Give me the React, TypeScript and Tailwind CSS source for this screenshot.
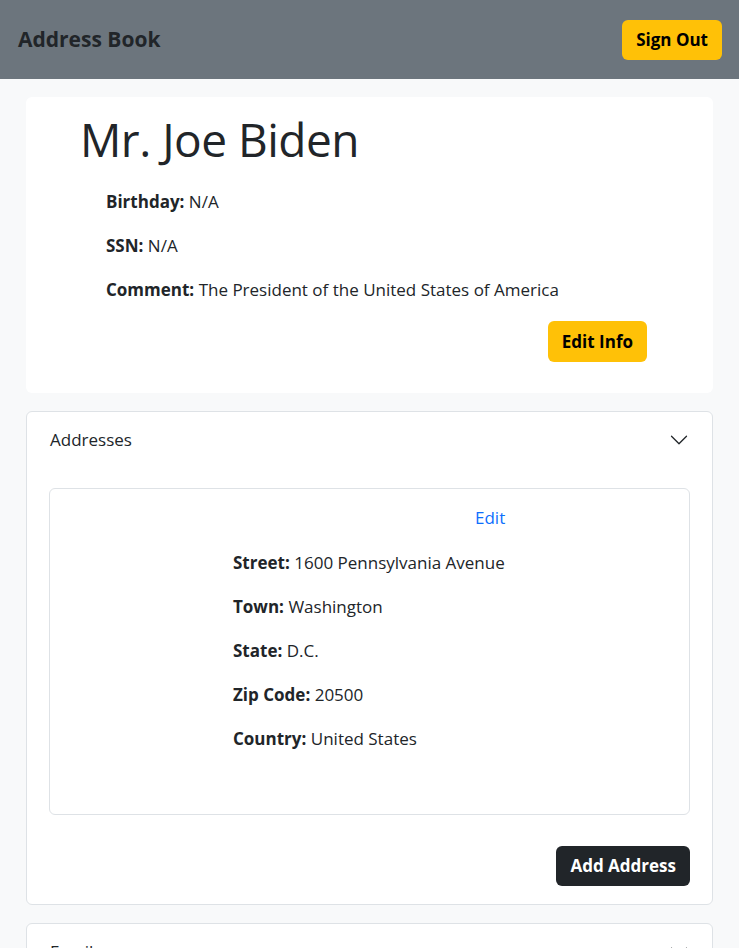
import React from 'react';

const Field = ({ label, value }: { label: string; value: string }) => (
    <p className="h-6 leading-6">
        <span className="font-bold">{label}:</span> {value}
    </p>
);

const ChevronDown = () => (
    <svg width="20" height="20" viewBox="0 0 16 16" fill="#212529">
        <path
            fillRule="evenodd"
            d="M1.646 4.646a.5.5 0 0 1 .708 0L8 10.293l5.646-5.647a.5.5 0 0 1 .708.708l-6 6a.5.5 0 0 1-.708 0l-6-6a.5.5 0 0 1 0-.708z"
        />
    </svg>
);

const App: React.FC = () => {
    return (
        <div className="min-h-[948px] bg-[#f8f9fa] text-[#212529] text-[17px] font-['Open_Sans','Liberation_Sans',sans-serif]">
            {/* Navbar */}
            <nav className="h-[79px] bg-[#6c757d] flex items-center justify-between pl-[18px] pr-[17px]">
                <span className="text-[21px] font-bold text-[#212529]">Address Book</span>
                <button className="h-10 px-[14px] rounded-md bg-[#ffc107] text-[17px] font-bold text-black">
                    Sign Out
                </button>
            </nav>

            <main className="px-[26px] pt-[18px] flex flex-col gap-[18px]">
                {/* Person card */}
                <div className="bg-white rounded-md h-[296px] pl-[54px] pr-[66px] pt-[14px]">
                    <h1 className="text-[46px] leading-[56px] font-normal tracking-[-0.5px]">Mr. Joe Biden</h1>
                    <div className="pl-[26px] mt-[23px] flex flex-col gap-5">
                        <Field label="Birthday" value="N/A" />
                        <Field label="SSN" value="N/A" />
                        <Field label="Comment" value="The President of the United States of America" />
                    </div>
                    <div className="flex justify-end mt-[19px]">
                        <button className="h-[41px] px-[14px] rounded-md bg-[#ffc107] text-[17px] font-bold text-black">
                            Edit Info
                        </button>
                    </div>
                </div>

                {/* Addresses accordion */}
                <div className="bg-white rounded-md border border-[#dee2e6]">
                    <div className="h-[56px] flex items-center justify-between pl-[23px] pr-[23px]">
                        <span>Addresses</span>
                        <ChevronDown />
                    </div>
                    <div className="px-[22px] pt-[20px] pb-[18px]">
                        <div className="h-[327px] rounded-md border border-[#dee2e6] pt-[16px]">
                            <div className="pl-[425px]">
                                <a className="text-[#0d6efd] leading-6 cursor-pointer">Edit</a>
                            </div>
                            <div className="pl-[183px] mt-5 flex flex-col gap-5">
                                <Field label="Street" value="1600 Pennsylvania Avenue" />
                                <Field label="Town" value="Washington" />
                                <Field label="State" value="D.C." />
                                <Field label="Zip Code" value="20500" />
                                <Field label="Country" value="United States" />
                            </div>
                        </div>
                        <div className="flex justify-end mt-[31px]">
                            <button className="h-10 px-[14px] rounded-md bg-[#212529] text-[17px] font-bold text-white">
                                Add Address
                            </button>
                        </div>
                    </div>
                </div>

                {/* Emails accordion */}
                <div className="bg-white rounded-md border border-[#dee2e6]">
                    <div className="h-[56px] flex items-center justify-between px-[23px]">
                        <span>Emails</span>
                        <ChevronDown />
                    </div>
                </div>
            </main>
        </div>
    );
};

export default App;
